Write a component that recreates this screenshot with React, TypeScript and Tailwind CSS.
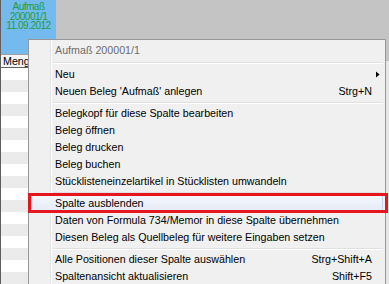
import React from 'react';

type Entry =
  | { kind: 'item'; label: string; shortcut?: string; submenu?: boolean; active?: boolean }
  | { kind: 'sep' };

const ENTRIES: Entry[] = [
  { kind: 'item', label: 'Neu', submenu: true },
  { kind: 'item', label: "Neuen Beleg 'Aufmaß' anlegen", shortcut: 'Strg+N' },
  { kind: 'sep' },
  { kind: 'item', label: 'Belegkopf für diese Spalte bearbeiten' },
  { kind: 'item', label: 'Beleg öffnen' },
  { kind: 'item', label: 'Beleg drucken' },
  { kind: 'item', label: 'Beleg buchen' },
  { kind: 'item', label: 'Stücklisteneinzelartikel in Stücklisten umwandeln' },
  { kind: 'sep' },
  { kind: 'item', label: 'Spalte ausblenden', active: true },
  { kind: 'item', label: 'Daten von Formula 734/Memor in diese Spalte übernehmen' },
  { kind: 'item', label: 'Diesen Beleg als Quellbeleg für weitere Eingaben setzen' },
  { kind: 'sep' },
  { kind: 'item', label: 'Alle Positionen dieser Spalte auswählen', shortcut: 'Strg+Shift+A' },
  { kind: 'item', label: 'Spaltenansicht aktualisieren', shortcut: 'Shift+F5' },
];

const ROWS = Array.from({ length: 18 }, (_, i) => i);

const App: React.FC = () => {
  return (
    <div className="relative w-[389px] h-[284px] overflow-hidden bg-[#c4c4c4] font-['Liberation_Sans',Arial,sans-serif] text-[10.7px] text-black">
      {/* grid behind the menu */}
      <div className="flex h-full">
        <div className="w-[56px] flex flex-col border-l border-[#5f5f5f] bg-white">
          <div className="h-[61px] bg-[#74baef] flex flex-col items-center pt-[2px] text-[10px] leading-[9.5px] tracking-[-0.5px] text-[#1d9e3e]">
            <span>Aufmaß</span>
            <span>200001/1</span>
            <span>11.09.2012</span>
          </div>
          <div className="h-[14px] bg-[#f4f4f4] border-t border-[#a0a0a0] border-b border-b-[#606060] pl-[2px] leading-[12px]">
            Menge
          </div>
          {ROWS.map((r) => (
            <div key={r} className={`h-[12px] shrink-0 ${r % 2 === 1 ? 'bg-[#ebebeb]' : 'bg-white'}`} />
          ))}
        </div>
        <div className="flex-1 flex flex-col">
          <div className="h-[61px] bg-[#c4c4c4]" />
          <div className="flex-1 bg-[#e6e6e6]" />
        </div>
      </div>

      {/* context menu */}
      <div className="absolute left-[28px] top-[39px] w-[358px] h-[260px] bg-[#f0f0f0] border border-[#979797] pt-[1px] px-[2px]">
        <div className="absolute left-[21px] top-0 bottom-0 w-[2px] border-l border-[#e2e3e3] border-r border-r-white" />
        <div className="relative h-[18px] flex items-center pl-[24px] text-[#6d6d6d]">Aufmaß 200001/1</div>
        <div className="relative h-[7px] flex items-center pl-[22px]">
          <div className="w-full h-[2px] border-t border-[#e0e0e0] border-b border-b-white" />
        </div>
        {ENTRIES.map((e, i) =>
          e.kind === 'sep' ? (
            <div key={i} className="relative h-[5px] flex items-center pl-[22px]">
              <div className="w-full h-[2px] border-t border-[#e0e0e0] border-b border-b-white" />
            </div>
          ) : (
            <div
              key={i}
              className={`relative h-[17px] flex items-center pl-[24px] pr-[11px] rounded-[2px] ${
                e.active ? 'bg-gradient-to-b from-[#f3f7fd] to-[#e4ecf8] border border-[#c6d8f0]' : ''
              }`}
            >
              <span className={`flex-1 whitespace-nowrap ${e.active ? '-ml-[1px]' : ''}`}>{e.label}</span>
              {e.shortcut && <span className="whitespace-nowrap">{e.shortcut}</span>}
              {e.submenu && (
                <svg className="absolute right-[3px] top-[5px]" width="4" height="7" viewBox="0 0 4 7">
                  <path d="M0 0.5 L3.5 3.5 L0 6.5 Z" fill="#000" />
                </svg>
              )}
            </div>
          )
        )}
      </div>

      {/* annotation around the highlighted entry */}
      <div className="absolute left-[28px] top-[193px] w-[360px] h-[20px] border-[3px] border-[#e5161e]" />
    </div>
  );
};

export default App;
